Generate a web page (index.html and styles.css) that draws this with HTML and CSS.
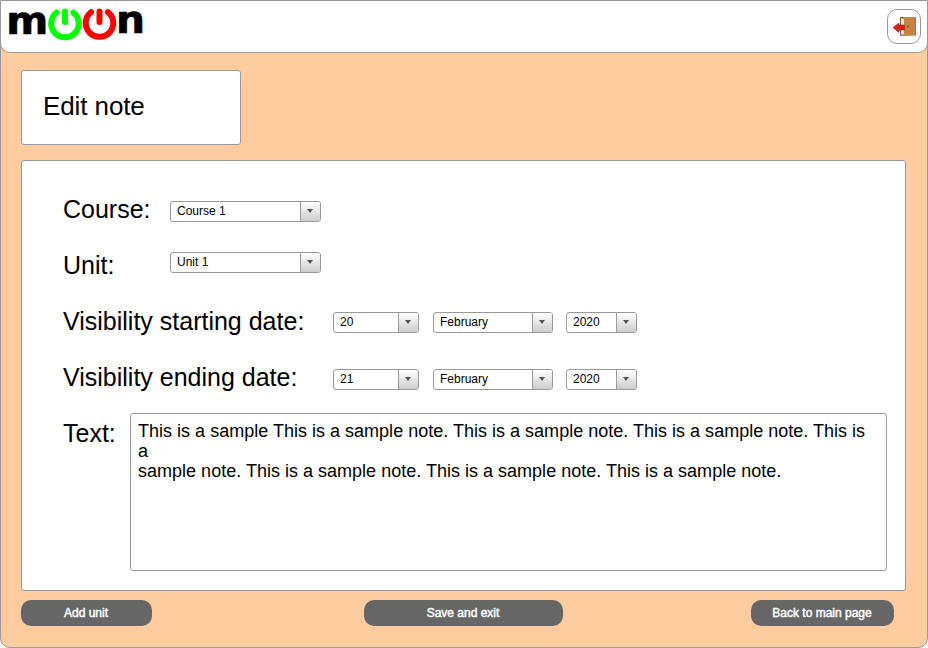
FILE: index.html
```html
<!DOCTYPE html>
<html lang="en">
<head>
<meta charset="utf-8">
<title>moon - Edit note</title>
<link rel="stylesheet" href="styles.css">
</head>
<body>
<div class="window">
  <header class="topbar">
    <svg class="logo" width="140" height="44" viewBox="0 0 140 44" role="img" aria-label="moon">
      <text class="logo-text" x="4.300" y="33" textLength="42" lengthAdjust="spacingAndGlyphs">m</text>
      <g class="power power-green">
        <path d="M54.600 11.600A13.800 13.800 0 1 0 71.400 11.600"/>
        <path d="M63 10.500V21"/>
      </g>
      <g class="power power-red">
        <path d="M89.100 11.100A13.800 13.800 0 1 0 105.900 11.100"/>
        <path d="M97.500 10.500V21"/>
      </g>
      <text class="logo-text" x="114" y="32" textLength="29" lengthAdjust="spacingAndGlyphs">n</text>
    </svg>
    <button class="exit" type="button" aria-label="Exit">
      <svg width="32" height="33" viewBox="0 0 32 33">
        <path d="M12 7h16v18.500H12z" fill="#a85f2d"/>
        <path d="M12.500 8h4v17h-4z" fill="#dce8e8" stroke="#8b5a38"/>
        <path d="M16 7h12v18l-12 1z" fill="#c78342"/>
        <path d="M26.500 7.500h1.500v17h-1.500z" fill="#b87639"/>
        <circle cx="20" cy="16.500" r="1" fill="#7d4b20"/>
        <path d="M5 17.500l6-4.500v2h5.500v5H11v2.500z" fill="#d81e1e" stroke="#b51616" stroke-width=".6"/>
      </svg>
    </button>
  </header>
  <main class="content">
    <h1 class="title">Edit note</h1>
    <form class="panel">
      <div class="row row-course">
        <span class="label">Course:</span>
        <div class="select wide"><span>Course 1</span><i class="arrow"></i></div>
      </div>
      <div class="row row-unit">
        <span class="label">Unit:</span>
        <div class="select wide"><span>Unit 1</span><i class="arrow"></i></div>
      </div>
      <div class="row row-start">
        <span class="label">Visibility starting date:</span>
        <div class="select day"><span>20</span><i class="arrow"></i></div>
        <div class="select month"><span>February</span><i class="arrow"></i></div>
        <div class="select year"><span>2020</span><i class="arrow"></i></div>
      </div>
      <div class="row row-end">
        <span class="label">Visibility ending date:</span>
        <div class="select day"><span>21</span><i class="arrow"></i></div>
        <div class="select month"><span>February</span><i class="arrow"></i></div>
        <div class="select year"><span>2020</span><i class="arrow"></i></div>
      </div>
      <div class="row row-text">
        <span class="label">Text:</span>
        <div class="note">This is a sample This is a sample note. This is a sample note. This is a sample note. This is<br>a<br>sample note. This is a sample note. This is a sample note. This is a sample note.</div>
      </div>
    </form>
    <footer class="actions">
      <button class="btn btn-add" type="button">Add unit</button>
      <button class="btn btn-save" type="button">Save and exit</button>
      <button class="btn btn-back" type="button">Back to main page</button>
    </footer>
  </main>
</div>
</body>
</html>
```
FILE: styles.css
```css
* { box-sizing: border-box; }
body {
  margin: 0;
  background: #fff;
  color: #000;
  font-family: "Liberation Sans", Arial, sans-serif;
}
.window {
  width: 928px;
  height: 648px;
  border: 1px solid #999;
  border-radius: 0 0 10px 10px;
  background: #ffcc9f;
  overflow: hidden;
}
.topbar {
  display: flex;
  justify-content: space-between;
  height: 53px;
  margin: -1px -1px 0;
  padding: 0 6px 0 1px;
  border: 1px solid #999;
  border-radius: 0 0 10px 10px;
  background: #fff;
}
.logo { overflow: visible; }
.logo-text {
  font-family: "DejaVu Sans", sans-serif;
  font-weight: bold;
  font-size: 37px;
  stroke: #000;
  stroke-width: .7px;
}
.power { fill: none; stroke-width: 6; stroke-linecap: round; }
.power-green { stroke: #0f0; }
.power-red { stroke: #f00; }
.exit {
  width: 34px;
  height: 35px;
  margin: 8px 0 0;
  padding: 0;
  border: 1px solid #999;
  border-radius: 10px;
  background: #fff;
}
.exit svg { display: block; }
.content { padding: 17px 20px 0; }
.title {
  width: 220px;
  height: 75px;
  margin: 0 0 15px;
  padding-left: 21px;
  border: 1px solid #999;
  border-radius: 3px;
  background: #fff;
  font-size: 26px;
  font-weight: normal;
  letter-spacing: -.1px;
  line-height: 71px;
}
.panel {
  width: 885px;
  height: 431px;
  padding: 21px 0 0 41px;
  border: 1px solid #999;
  border-radius: 3px;
  background: #fff;
}
.row {
  display: flex;
  align-items: flex-start;
  height: 56px;
}
.label {
  flex: none;
  width: 270px;
  font-size: 25px;
  line-height: 55px;
  white-space: nowrap;
}
.row-course .label, .row-unit .label { width: 107px; }
.row-text .label { width: 67px; }
.row-course .select { margin-top: 19px; }
.row-unit .select { margin-top: 14px; }
.row-start .select { margin-top: 18px; }
.row-end .select { margin-top: 19px; }
.select {
  display: flex;
  justify-content: space-between;
  height: 21px;
  border: 1px solid #999;
  border-radius: 3px;
  background: #fff;
  font-size: 12px;
  line-height: 19px;
  padding-left: 6px;
  overflow: hidden;
}
.wide { width: 151px; }
.day { width: 86px; margin-right: 14px; }
.month { width: 120px; margin-right: 13px; }
.year { width: 71px; }
.arrow {
  display: flex;
  align-items: center;
  justify-content: center;
  width: 20px;
  padding: 0 1px 1px 0;
  border-left: 1px solid #999;
  background: linear-gradient(#fff, #ccc);
}
.arrow::before {
  content: "";
  border: solid transparent;
  border-width: 4px 3px 0;
  border-top-color: #555;
}
.note {
  width: 757px;
  height: 158px;
  margin-top: 7px;
  padding: 7px;
  border: 1px solid #999;
  border-radius: 3px;
  font-size: 18px;
  letter-spacing: .012px;
  line-height: 20px;
  white-space: nowrap;
}
.actions {
  display: flex;
  justify-content: space-between;
  width: 873px;
  margin-top: 9px;
}
.btn {
  height: 26px;
  padding: 0 1px 0 0;
  border: 0;
  border-radius: 10px;
  background: #666;
  color: #fff;
  font: 12px/26px "Liberation Sans", Arial, sans-serif;
  -webkit-text-stroke: .45px #fff;
}
.btn-add { width: 131px; }
.btn-save { width: 199px; margin-left: 24px; }
.btn-back { width: 143px; }
```
